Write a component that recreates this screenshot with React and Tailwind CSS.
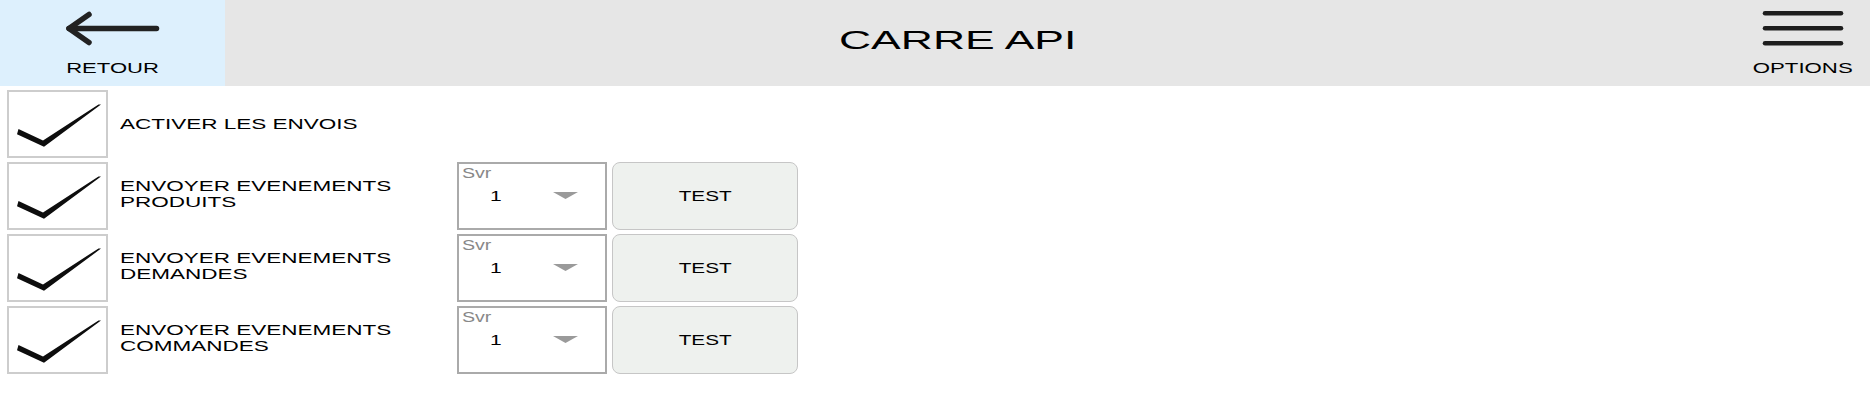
import React from 'react';

const rows = [
  { lines: ['ACTIVER LES ENVOIS'], server: false },
  { lines: ['ENVOYER EVENEMENTS', 'PRODUITS'], server: true },
  { lines: ['ENVOYER EVENEMENTS', 'DEMANDES'], server: true },
  { lines: ['ENVOYER EVENEMENTS', 'COMMANDES'], server: true },
];

const Check = () => (
  <div className="w-[101px] h-[68px] border-2 border-[#cdcdcd] bg-white shrink-0">
    <svg viewBox="0 0 97 64" preserveAspectRatio="none" className="w-full h-full">
      <polygon points="9.5,37 34,48.6 89.5,12.4 92,12.6 35,54.8 8,42.2" fill="#0d0d0d" />
    </svg>
  </div>
);

const ServerSelect = () => (
  <div className="w-[150px] h-[68px] border-2 border-[#aaaaaa] bg-white shrink-0 flex flex-col">
    <span className="pl-[3px] pt-[1px] text-[14px] leading-[16px] text-[#888888]">
      <span className="inline-block origin-left scale-x-[1.4]">Svr</span>
    </span>
    <div className="flex items-center mt-[6px]">
      <span className="ml-[31px] w-[8px] text-[15px] leading-[17px] text-black">
        <span className="inline-block origin-left scale-x-[1.4]">1</span>
      </span>
      <svg width="25" height="7" viewBox="0 0 25 7" className="ml-[55px]">
        <polygon points="0,0 25,0 12.5,7" fill="#9a9a9a" />
      </svg>
    </div>
  </div>
);

const TestButton = () => (
  <button className="ml-[5px] w-[186px] h-[68px] rounded-[8px] border border-[#c6c6c6] bg-[#eef1ee] flex items-center justify-center text-[15px] text-black">
    <span className="inline-block scale-x-[1.38]">TEST</span>
  </button>
);

export default function App() {
  return (
    <div className="w-[1870px] h-[414px] bg-white font-['Liberation_Sans',Arial,sans-serif] text-black">
      <header className="flex h-[86px] bg-[#e6e6e6]">
        <div className="w-[225px] bg-[#ddf0fd] flex flex-col items-center pt-[10px]">
          <svg width="100" height="38" viewBox="0 0 100 38">
            <g stroke="#222" strokeWidth="5.5" strokeLinecap="round" strokeLinejoin="round" fill="none">
              <line x1="6" y1="18.5" x2="93.5" y2="18.5" />
              <polyline points="26,4.5 6,18.5 26,32.5" />
            </g>
          </svg>
          <span className="mt-[11px] text-[15px] leading-[17px]">
            <span className="inline-block scale-x-[1.47]">RETOUR</span>
          </span>
        </div>
        <div className="flex-1 flex items-center justify-center pb-[5px]">
          <h1 className="text-[25px] leading-[25px]">
            <span className="inline-block scale-x-[1.78]">CARRE API</span>
          </h1>
        </div>
        <div className="w-[180px] flex justify-end pr-[17px]">
          <div className="w-[100px] flex flex-col items-center pt-[10px]">
            <svg width="100" height="38" viewBox="0 0 100 38">
              <g stroke="#1e1e1e" strokeWidth="4.5" strokeLinecap="round">
                <line x1="12" y1="3.3" x2="88" y2="3.3" />
                <line x1="12" y1="18.3" x2="88" y2="18.3" />
                <line x1="12" y1="33.3" x2="88" y2="33.3" />
              </g>
            </svg>
            <span className="mt-[11px] text-[15px] leading-[17px]">
              <span className="inline-block scale-x-[1.48]">OPTIONS</span>
            </span>
          </div>
        </div>
      </header>

      <main className="flex flex-col gap-[4px] pt-[4px] pl-[7px]">
        {rows.map((row, i) => (
          <div key={i} className="flex items-center h-[68px]">
            <Check />
            <div className="w-[349px] pl-[12px] shrink-0">
              <span className="inline-block origin-left scale-x-[1.5] text-[15px] leading-[16px]">
                {row.lines.map((l, j) => (
                  <React.Fragment key={j}>
                    {j > 0 && <br />}
                    {l}
                  </React.Fragment>
                ))}
              </span>
            </div>
            {row.server && (
              <>
                <ServerSelect />
                <TestButton />
              </>
            )}
          </div>
        ))}
      </main>
    </div>
  );
}
